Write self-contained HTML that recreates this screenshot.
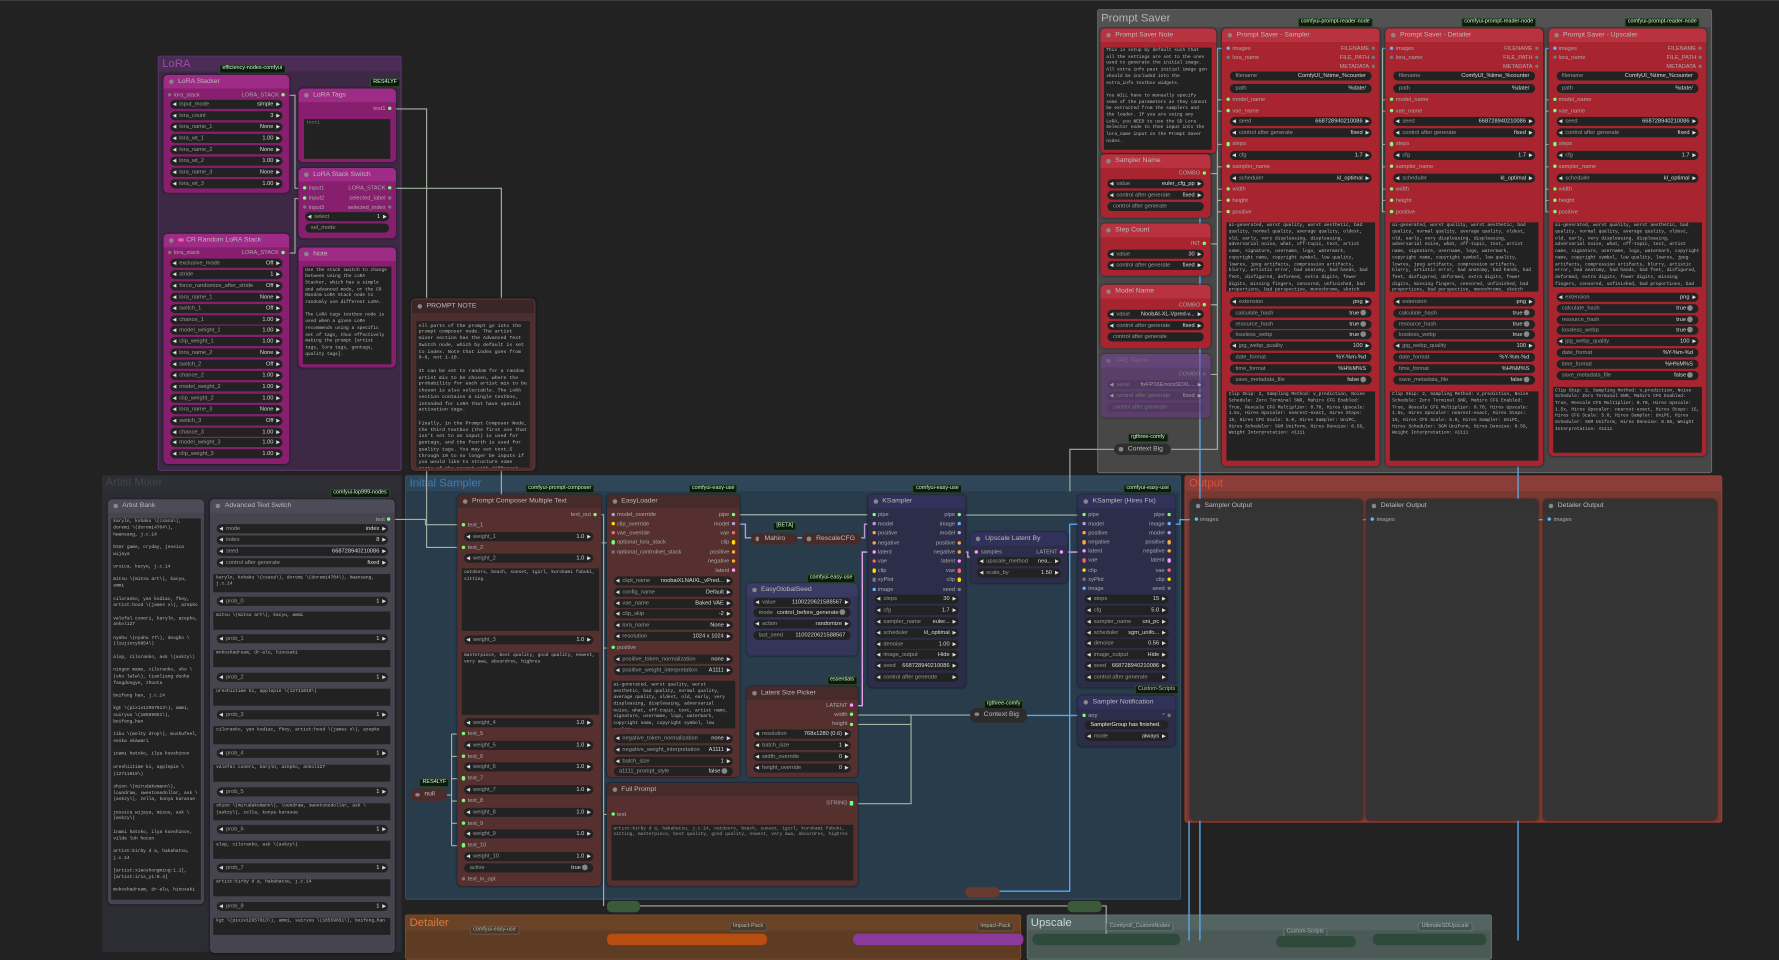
<!DOCTYPE html>
<html><head><meta charset="utf-8"><style>
*{box-sizing:border-box}
html,body{margin:0;padding:0;width:1779px;height:939px;overflow:hidden;background:#222}
.c{position:absolute;left:0;top:0;width:1568px;height:828px;transform:scale(1.13457);transform-origin:0 0;font-family:"Liberation Sans",sans-serif;border-top:1px solid #3a3a3a}
.gr{position:absolute;border-radius:2px}
.gt{position:absolute;left:0;right:0;top:0;height:13px;font-size:10px;line-height:13px;padding-left:3px;white-space:nowrap}
.n{position:absolute;border-radius:4px;overflow:hidden;box-shadow:0 0 2px rgba(0,0,0,.6)}
.t{height:12px;line-height:12px;font-size:6px;padding-left:13px;color:#bbb;position:relative;white-space:nowrap;overflow:hidden}
.t:before{content:"";position:absolute;left:5px;top:4px;width:4px;height:4px;border-radius:50%;background:#888}
.w{position:absolute;margin:0;left:6px;right:6px;height:8px;border-radius:4px;background:#222;font-size:5px;line-height:8px;color:#999;padding:0 8px;white-space:nowrap;overflow:hidden}
.w:before{content:"◀";position:absolute;left:2px;color:#ddd;font-size:4.5px}
.w:after{content:"▶";position:absolute;right:2px;color:#ddd;font-size:4.5px}
.w b{float:right;font-weight:normal;color:#ddd}
.w.x{padding:0 5px}.w.x:before,.w.x:after{content:none}
.w.tg b:after{content:"";display:inline-block;width:5px;height:5px;border-radius:50%;background:#888;margin-left:1px;vertical-align:-1px}
.s{position:absolute;margin:0;font-size:5px;line-height:6px;color:#aaa;white-space:nowrap}
.s.l{left:2px}.s.r{right:2px;text-align:right}
.s i{display:inline-block;width:3.2px;height:3.2px;border-radius:50%;background:#777;vertical-align:middle;margin:0 2px}
i.g{background:#7f7!important}i.p{background:#b39ddb!important}i.y{background:#fd0!important}i.r{background:#f66!important}i.o{background:#fa3!important}i.k{background:#f9f!important}i.b{background:#64b5f6!important}
.tb{position:absolute;margin:0;left:5px;right:5px;background:#222;font-family:"Liberation Mono",monospace;font-size:4px;line-height:5.7px;color:#bbb;padding:1.5px 2px;overflow:hidden;word-wrap:break-word}
.lb{position:absolute;background:#0f1a0f;border:0.5px solid #2c4a2c;color:#cfc;font-size:4.8px;line-height:6px;padding:0 2px;border-radius:1.5px;white-space:nowrap}
.mg{background:#871f6e}.mg>.t{background:#9e2b86}
.rd{background:#a82530}.rd>.t{background:#b93240}
.br{background:#55302f}.br>.t{background:#472b2b}
.bp{background:#2c2d48}.bp>.t{background:#30325a}
.gy{background:#353535}.gy>.t{background:#333}
.am{background:#45444f}.am>.t{background:#4c4b57}
.col{position:absolute;height:10.5px;border-radius:5px;font-size:6px;line-height:10.5px;color:#bbb;padding-left:12px;white-space:nowrap}
.col:before{content:"";position:absolute;left:4px;top:3.5px;width:3.5px;height:3.5px;border-radius:50%;background:#888}
</style></head><body><div class="c">

<div class="gr" style="left:139px;top:47.5px;width:215px;height:366px;background:#3d2946;border:1px solid #5a3468"><div class="gt" style="background:#4a2c55;color:#a04ab0">LoRA</div></div>
<div class="gr" style="left:966.5px;top:6.5px;width:542px;height:409px;background:#474747;border:1px solid #666"><div class="gt" style="background:#525252;color:#b5b5b5;height:15px;line-height:15px">Prompt Saver</div></div>
<div class="gr" style="left:90px;top:418px;width:263.5px;height:420px;background:#2c2c33"><div class="gt" style="background:#2e2e35;color:#44444e">Artist Mixer</div></div>
<div class="gr" style="left:357px;top:418px;width:683.5px;height:373.5px;background:#293c4c;border:1px solid #2f5068"><div class="gt" style="background:#2f4659;color:#3d7fb8">Initial Sampler</div></div>
<div class="gr" style="left:1044px;top:418px;width:473.5px;height:305.5px;background:#773a33;border:1px solid #a53b30"><div class="gt" style="background:#8b3e37;color:#e0503f">Output</div></div>
<div class="gr" style="left:357px;top:805px;width:543px;height:40px;background:#5e3c24;border:1px solid #7a4a28"><div class="gt" style="background:#6a4326;color:#e07a3a">Detailer</div></div>
<div class="gr" style="left:904.5px;top:805px;width:410px;height:40px;background:#4b5a57;border:1px solid #5e706c"><div class="gt" style="background:#536462;color:#c8dcd8">Upscale</div></div>

<svg style="position:absolute;left:0;top:0" width="1568" height="828" fill="none">
<g stroke="#a3b3a3" stroke-width="1">
<path d="M349,95 H376 V481.5 H403"/><path d="M348,456.8 H375 V461.5 H403"/>
<path d="M349,165 H441.9 V477.4 H537"/>
<path d="M255,83 H260 V165 H264"/><path d="M255,222 H260 V174 H264"/>
<path d="M528,452.7 H532 V570.2 H537 M532,570 V716.8 H537 M532,716 V797.5"/>
<path d="M393.6,699.8 H398 M398,646 V744.4 M398,646 H403 M398,665.7 H403 M398,685.3 H403 M398,705 H403 M398,724.7 H403 M398,744.4 H403"/>
<path d="M652,452.7 H764.6"/><path d="M851,453 H950"/>
<path d="M756,629.2 H857 M756,637.5 H803 V629 M756,707.4 H803 V637"/>
<path d="M564,797.5 H941 M971,797.5 H975 V828"/>
<path d="M943,432 V395 H982"/>
<path d="M1032,395 H1073 V41.7 M1073,87 H1080 M1073,97 H1080 M1073,126.3 H1080 M1073,146 H1080 M1073,165.7 H1080 M1073,175.7 H1080 M1073,185.7 H1080 M1067,152 H1073 M1067,214 H1073 M1067,267.6 H1073 M1067,329 H1073"/>
<path d="M1218.5,41.7 V186 M1218.5,87 H1224 M1218.5,97 H1224 M1218.5,126.3 H1224 M1218.5,146 H1224 M1218.5,165.7 H1224 M1218.5,175.7 H1224 M1218.5,185.7 H1224"/>
<path d="M1362.5,41.7 V186 M1362.5,87 H1368 M1362.5,97 H1368 M1362.5,126.3 H1368 M1362.5,146 H1368 M1362.5,165.7 H1368 M1362.5,175.7 H1368 M1362.5,185.7 H1368"/>
</g>
<g stroke="#b39ddb" stroke-width="1.2"><path d="M652,461 H657 V473 H663 M699,473 H707 M759,473 H762 V461 H764.6"/></g>
<g stroke="#f0a0f0" stroke-width="1.2"><path d="M756,621 H760 V485.6 H764.6 M851,485.6 H853 V490 H857 M941,485.6 H950"/></g>
<g stroke="#5aa8ea" stroke-width="1.2"><path d="M905,629.6 H950 M942.8,461 H950 M942.8,461 V784.5 H881 M1035.7,461 H1040 V457 H1050 M1057.6,191 V828 M1048,723 V828 M1338,405 V828 M1073,41.7 H1080 M1218.5,41.7 H1224 M1362.5,41.7 H1368 M1200,457 H1206 M1356,457 H1362"/></g>
</svg>

<div class="lb" style="left:193px;top:56px">efficiency-nodes-comfyui</div>
<div class="lb" style="left:326px;top:68px">RES4LYF</div>
<div class="lb" style="left:193px;top:225px">Comfyroll_CustomNodes</div>
<div class="n mg" style="left:144px;top:65px;width:111px;height:104px"><div class="t">LoRA Stacker</div>
<p class="s l" style="top:15px"><i></i>lora_stack</p><p class="s r" style="top:15px">LORA_STACK<i class="g"></i></p>
<p class="w" style="top:22.4px">input_mode<b>simple</b></p><p class="w" style="top:32.3px">lora_count<b>3</b></p><p class="w" style="top:42.2px">lora_name_1<b>None</b></p><p class="w" style="top:52.1px">lora_wt_1<b>1.00</b></p><p class="w" style="top:62px">lora_name_2<b>None</b></p><p class="w" style="top:71.9px">lora_wt_2<b>1.00</b></p><p class="w" style="top:81.8px">lora_name_3<b>None</b></p><p class="w" style="top:91.7px">lora_wt_3<b>1.00</b></p></div>
<div class="n mg" style="left:144px;top:205px;width:111px;height:203px"><div class="t"><span style="display:inline-block;width:5px;height:3px;background:#f5a;border-radius:2px;margin-right:2px"></span>CR Random LoRA Stack</div>
<p class="s l" style="top:14px"><i></i>lora_stack</p><p class="s r" style="top:14px">LORA_STACK<i class="g"></i></p>
<p class="w" style="top:22px">exclusive_mode<b>Off</b></p><p class="w" style="top:31.9px">stride<b>1</b></p><p class="w" style="top:41.8px">force_randomize_after_stride<b>Off</b></p><p class="w" style="top:51.7px">lora_name_1<b>None</b></p><p class="w" style="top:61.6px">switch_1<b>Off</b></p><p class="w" style="top:71.5px">chance_1<b>1.00</b></p><p class="w" style="top:81.4px">model_weight_1<b>1.00</b></p><p class="w" style="top:91.3px">clip_weight_1<b>1.00</b></p><p class="w" style="top:101.2px">lora_name_2<b>None</b></p><p class="w" style="top:111.1px">switch_2<b>Off</b></p><p class="w" style="top:121px">chance_2<b>1.00</b></p><p class="w" style="top:130.9px">model_weight_2<b>1.00</b></p><p class="w" style="top:140.8px">clip_weight_2<b>1.00</b></p><p class="w" style="top:150.7px">lora_name_3<b>None</b></p><p class="w" style="top:160.6px">switch_3<b>Off</b></p><p class="w" style="top:170.5px">chance_3<b>1.00</b></p><p class="w" style="top:180.4px">model_weight_3<b>1.00</b></p><p class="w" style="top:190.3px">clip_weight_3<b>1.00</b></p></div>
<div class="n mg" style="left:263px;top:77px;width:86px;height:65px"><div class="t">LoRA Tags</div>
<p class="s r" style="top:15px">text1<i class="g"></i></p><p class="tb" style="top:27px;height:35px;color:#888">text1</p></div>
<div class="n mg" style="left:263px;top:147px;width:86px;height:62px"><div class="t">LoRA Stack Switch</div>
<p class="s l" style="top:15px"><i class="g"></i>input1</p><p class="s r" style="top:15px">LORA_STACK<i class="g"></i></p>
<p class="s l" style="top:24px"><i class="g"></i>input2</p><p class="s r" style="top:24px">selected_label<i></i></p>
<p class="s l" style="top:31.5px"><i></i>input3</p><p class="s r" style="top:31.5px">selected_index<i></i></p>
<p class="w" style="top:39px">select<b>1</b></p><p class="w x tg" style="top:49px">sel_mode<b>sel_mode_on_execution</b></p></div>
<div class="n mg" style="left:263px;top:217px;width:86px;height:106px"><div class="t">Note</div>
<p class="tb" style="top:17px;height:86px;left:4px;right:4px">Use the stack switch to change between using the LoRA Stacker, which has a simple and advanced mode, or the CR Random LoRA Stack node to randomly use different LoRA.<br><br>The LoRA tags textbox node is used when a given LoRA recommends using a specific set of tags, thus effectively making the prompt [artist tags, lora tags, gentags, quality tags].</p></div>
<div class="n" style="left:362px;top:262px;width:110px;height:152px;background:#4d2e2e;border:1px solid #5a3434"><div class="t" style="background:#3a2626">PROMPT NOTE</div>
<p class="tb" style="top:19px;height:129px;left:4px;right:4px;font-size:4.3px;line-height:5.75px">All parts of the prompt go into the prompt composer node. The artist mixer section has the Advanced Text Switch node, which by default is set to index. Note that index goes from 0-9, not 1-10.<br><br>It can be set to random for a random artist mix to be chosen, where the probability for each artist mix to be chosen is also selectable. The LoRA section contains a single textbox, intended for LoRA that have special activation tags.<br><br>Finally, in the Prompt Composer Node, the third textbox (the first one that isn't set to an input) is used for gentags, and the fourth is used for quality tags. You may set text_5 through 10 to no longer be inputs if you would like to structure some parts of the prompt with different, easily selectable weights.</p></div>

<div class="lb" style="left:1143.5px;top:15px">comfyui-prompt-reader-node</div>
<div class="lb" style="left:1287.6px;top:15px">comfyui-prompt-reader-node</div>
<div class="lb" style="left:1431.7px;top:15px">comfyui-prompt-reader-node</div>
<div class="n rd" style="left:970px;top:23.5px;width:102px;height:110px"><div class="t">Prompt Saver Note</div>
<p class="tb" style="top:17px;height:90px;left:3px;right:4px">This is setup by default such that all the settings are set to the ones used to generate the initial image. All extra info past initial image gen should be included into the extra_info textbox widgets.<br><br>You WILL have to manually specify some of the parameters as they cannot be extracted from the samplers and the loader. If you are using any LoRA, you NEED to use the SD Lora Selector node to then input into the lora_name input on the Prompt Saver nodes.</p></div>
<div class="n rd" style="left:970px;top:134.6px;width:97px;height:56px"><div class="t">Sampler Name</div>
<p class="s r" style="top:14.4px">COMBO<i class="g"></i></p><p class="w" style="top:22.4px">value<b>euler_cfg_pp</b></p><p class="w" style="top:32.4px">control after generate<b>fixed</b></p><p class="w x" style="top:42.4px">control after generate</p></div>
<div class="n rd" style="left:970px;top:196px;width:97px;height:46px"><div class="t">Step Count</div>
<p class="s r" style="top:15px">INT<i class="g"></i></p><p class="w" style="top:23px">value<b>30</b></p><p class="w" style="top:32.7px">control after generate<b>fixed</b></p></div>
<div class="n rd" style="left:970px;top:249.7px;width:97px;height:56px"><div class="t">Model Name</div>
<p class="s r" style="top:14.9px">COMBO<i class="g"></i></p><p class="w" style="top:22.8px">value<b>NoobAI-XL-Vpred-v...</b></p><p class="w" style="top:32.7px">control after generate<b>fixed</b></p><p class="w x" style="top:42.3px">control after generate</p></div>
<div class="n" style="left:970px;top:311px;width:97px;height:56px;background:#6a3a8a;opacity:.55"><div class="t" style="background:#7a44a0;color:#a7a">VAE Name</div>
<p class="s r" style="top:15px">COMBO<i></i></p><p class="w" style="top:23px;background:#5a2c78">value<b>fixFP16ErrorsSDXL...</b></p><p class="w" style="top:33px;background:#5a2c78">control after generate<b>fixed</b></p><p class="w x" style="top:43px;background:#5a2c78">control after generate</p></div>
<div class="lb" style="left:994px;top:381px">rgthree-comfy</div>
<div class="col" style="left:982px;top:389.5px;width:50px;background:#2e2e2e">Context Big</div>

<div class="n rd" style="left:1077px;top:23.5px;width:139px;height:386px"><div class="t">Prompt Saver - Sampler</div>
<p class="s l" style="top:15.2px"><i class="b"></i>images</p><p class="s r" style="top:15.2px">FILENAME<i></i></p>
<p class="s l" style="top:23.4px"><i></i>lora_name</p><p class="s r" style="top:23.4px">FILE_PATH<i></i></p><p class="s r" style="top:31.4px">METADATA<i></i></p>
<p class="w x" style="top:38.9px;left:7px;right:7px">filename<b>ComfyUI_%time_%counter</b></p><p class="w x" style="top:49.2px;left:7px;right:7px">path<b>%date/</b></p>
<p class="s l" style="top:60.5px"><i class="g"></i>model_name</p><p class="s l" style="top:70.5px"><i class="g"></i>vae_name</p>
<p class="w" style="top:78.9px;left:7px;right:7px">seed<b>668728940210086</b></p><p class="w" style="top:88.5px;left:7px;right:7px">control after generate<b>fixed</b></p>
<p class="s l" style="top:99.8px"><i class="g"></i>steps</p><p class="w" style="top:108.2px;left:7px;right:7px">cfg<b>1.7</b></p>
<p class="s l" style="top:119.5px"><i class="g"></i>sampler_name</p><p class="w" style="top:128.2px;left:7px;right:7px">scheduler<b>kl_optimal</b></p>
<p class="s l" style="top:139.2px"><i class="g"></i>width</p><p class="s l" style="top:149.2px"><i class="g"></i>height</p><p class="s l" style="top:159.2px"><i class="g"></i>positive</p>
<p class="tb" style="top:171.3px;height:60.8px;left:4px;right:4px">ai-generated, worst quality, worst aesthetic, bad quality, normal quality, average quality, oldest, old, early, very displeasing, displeasing, adversarial noise, what, off-topic, text, artist name, signature, username, logo, watermark, copyright name, copyright symbol, low quality, lowres, jpeg artifacts, compression artifacts, blurry, artistic error, bad anatomy, bad hands, bad feet, disfigured, deformed, extra digits, fewer digits, missing fingers, censored, unfinished, bad proportions, bad perspective, monochrome, sketch</p>
<p class="w" style="top:237.5px;left:7px;right:7px">extension<b>png</b></p><p class="w x tg" style="top:247.5px;left:7px;right:7px">calculate_hash<b>true</b></p><p class="w x tg" style="top:257.2px;left:7px;right:7px">resource_hash<b>true</b></p><p class="w x tg" style="top:266.9px;left:7px;right:7px">lossless_webp<b>true</b></p><p class="w" style="top:276.9px;left:7px;right:7px">jpg_webp_quality<b>100</b></p><p class="w x" style="top:286.9px;left:7px;right:7px">date_format<b>%Y-%m-%d</b></p><p class="w x" style="top:296.8px;left:7px;right:7px">time_format<b>%H%M%S</b></p><p class="w x tg" style="top:306.5px;left:7px;right:7px">save_metadata_file<b>false</b></p>
<p class="tb" style="top:320.2px;height:61.7px;left:4px;right:4px">Clip Skip: 2, Sampling Method: v_prediction, Noise Schedule: Zero Terminal SNR, Mahiro CFG Enabled: True, Rescale CFG Multiplier: 0.70, Hires Upscale: 1.5x, Hires Upscaler: nearest-exact, Hires Steps: 15, Hires CFG Scale: 5.0, Hires Sampler: UniPC, Hires Scheduler: SGM Uniform, Hires Denoise: 0.56, Weight Interpretation: A1111</p></div>

<div class="n rd" style="left:1221px;top:23.5px;width:139px;height:386px"><div class="t">Prompt Saver - Detailer</div>
<p class="s l" style="top:15.2px"><i class="b"></i>images</p><p class="s r" style="top:15.2px">FILENAME<i></i></p>
<p class="s l" style="top:23.4px"><i></i>lora_name</p><p class="s r" style="top:23.4px">FILE_PATH<i></i></p><p class="s r" style="top:31.4px">METADATA<i></i></p>
<p class="w x" style="top:38.9px;left:7px;right:7px">filename<b>ComfyUI_%time_%counter</b></p><p class="w x" style="top:49.2px;left:7px;right:7px">path<b>%date/</b></p>
<p class="s l" style="top:60.5px"><i class="g"></i>model_name</p><p class="s l" style="top:70.5px"><i class="g"></i>vae_name</p>
<p class="w" style="top:78.9px;left:7px;right:7px">seed<b>668728940210086</b></p><p class="w" style="top:88.5px;left:7px;right:7px">control after generate<b>fixed</b></p>
<p class="s l" style="top:99.8px"><i class="g"></i>steps</p><p class="w" style="top:108.2px;left:7px;right:7px">cfg<b>1.7</b></p>
<p class="s l" style="top:119.5px"><i class="g"></i>sampler_name</p><p class="w" style="top:128.2px;left:7px;right:7px">scheduler<b>kl_optimal</b></p>
<p class="s l" style="top:139.2px"><i class="g"></i>width</p><p class="s l" style="top:149.2px"><i class="g"></i>height</p><p class="s l" style="top:159.2px"><i class="g"></i>positive</p>
<p class="tb" style="top:171.3px;height:60.8px;left:4px;right:4px">ai-generated, worst quality, worst aesthetic, bad quality, normal quality, average quality, oldest, old, early, very displeasing, displeasing, adversarial noise, what, off-topic, text, artist name, signature, username, logo, watermark, copyright name, copyright symbol, low quality, lowres, jpeg artifacts, compression artifacts, blurry, artistic error, bad anatomy, bad hands, bad feet, disfigured, deformed, extra digits, fewer digits, missing fingers, censored, unfinished, bad proportions, bad perspective, monochrome, sketch</p>
<p class="w" style="top:237.5px;left:7px;right:7px">extension<b>png</b></p><p class="w x tg" style="top:247.5px;left:7px;right:7px">calculate_hash<b>true</b></p><p class="w x tg" style="top:257.2px;left:7px;right:7px">resource_hash<b>true</b></p><p class="w x tg" style="top:266.9px;left:7px;right:7px">lossless_webp<b>true</b></p><p class="w" style="top:276.9px;left:7px;right:7px">jpg_webp_quality<b>100</b></p><p class="w x" style="top:286.9px;left:7px;right:7px">date_format<b>%Y-%m-%d</b></p><p class="w x" style="top:296.8px;left:7px;right:7px">time_format<b>%H%M%S</b></p><p class="w x tg" style="top:306.5px;left:7px;right:7px">save_metadata_file<b>false</b></p>
<p class="tb" style="top:320.2px;height:61.7px;left:4px;right:4px">Clip Skip: 2, Sampling Method: v_prediction, Noise Schedule: Zero Terminal SNR, Mahiro CFG Enabled: True, Rescale CFG Multiplier: 0.70, Hires Upscale: 1.5x, Hires Upscaler: nearest-exact, Hires Steps: 15, Hires CFG Scale: 5.0, Hires Sampler: UniPC, Hires Scheduler: SGM Uniform, Hires Denoise: 0.56, Weight Interpretation: A1111</p></div>

<div class="n rd" style="left:1364.6px;top:23.5px;width:139.5px;height:377.5px"><div class="t">Prompt Saver - Upscaler</div>
<p class="s l" style="top:15.2px"><i class="b"></i>images</p><p class="s r" style="top:15.2px">FILENAME<i></i></p>
<p class="s l" style="top:23.4px"><i></i>lora_name</p><p class="s r" style="top:23.4px">FILE_PATH<i></i></p><p class="s r" style="top:31.4px">METADATA<i></i></p>
<p class="w x" style="top:38.9px;left:7px;right:7px">filename<b>ComfyUI_%time_%counter</b></p><p class="w x" style="top:49.2px;left:7px;right:7px">path<b>%date/</b></p>
<p class="s l" style="top:60.5px"><i class="g"></i>model_name</p><p class="s l" style="top:70.5px"><i class="g"></i>vae_name</p>
<p class="w" style="top:78.9px;left:7px;right:7px">seed<b>668728940210086</b></p><p class="w" style="top:88.5px;left:7px;right:7px">control after generate<b>fixed</b></p>
<p class="s l" style="top:99.8px"><i class="g"></i>steps</p><p class="w" style="top:108.2px;left:7px;right:7px">cfg<b>1.7</b></p>
<p class="s l" style="top:119.5px"><i class="g"></i>sampler_name</p><p class="w" style="top:128.2px;left:7px;right:7px">scheduler<b>kl_optimal</b></p>
<p class="s l" style="top:139.2px"><i class="g"></i>width</p><p class="s l" style="top:149.2px"><i class="g"></i>height</p><p class="s l" style="top:159.2px"><i class="g"></i>positive</p>
<p class="tb" style="top:171.3px;height:57px;left:4px;right:4px">ai-generated, worst quality, worst aesthetic, bad quality, normal quality, average quality, oldest, old, early, very displeasing, displeasing, adversarial noise, what, off-topic, text, artist name, signature, username, logo, watermark, copyright name, copyright symbol, low quality, lowres, jpeg artifacts, compression artifacts, blurry, artistic error, bad anatomy, bad hands, bad feet, disfigured, deformed, extra digits, fewer digits, missing fingers, censored, unfinished, bad proportions, bad perspective, monochrome, sketch</p>
<p class="w" style="top:233.5px;left:7px;right:7px">extension<b>png</b></p><p class="w x tg" style="top:243.2px;left:7px;right:7px">calculate_hash<b>true</b></p><p class="w x tg" style="top:253.1px;left:7px;right:7px">resource_hash<b>true</b></p><p class="w x tg" style="top:262.8px;left:7px;right:7px">lossless_webp<b>true</b></p><p class="w" style="top:272.8px;left:7px;right:7px">jpg_webp_quality<b>100</b></p><p class="w x" style="top:282.7px;left:7px;right:7px">date_format<b>%Y-%m-%d</b></p><p class="w x" style="top:292.7px;left:7px;right:7px">time_format<b>%H%M%S</b></p><p class="w x tg" style="top:302.7px;left:7px;right:7px">save_metadata_file<b>false</b></p>
<p class="tb" style="top:316.5px;height:58px;left:4px;right:4px">Clip Skip: 2, Sampling Method: v_prediction, Noise Schedule: Zero Terminal SNR, Mahiro CFG Enabled: True, Rescale CFG Multiplier: 0.70, Hires Upscale: 1.5x, Hires Upscaler: nearest-exact, Hires Steps: 15, Hires CFG Scale: 5.0, Hires Sampler: UniPC, Hires Scheduler: SGM Uniform, Hires Denoise: 0.56, Weight Interpretation: A1111</p></div>

<div class="lb" style="left:290.7px;top:430.4px">comfyui-lop999-nodes</div>
<div class="n am" style="left:94.8px;top:438.6px;width:85.6px;height:357.5px"><div class="t">Artist Bank</div>
<p class="tb" style="top:17px;height:336px;left:3px;right:3px">karyln, kohaku \(csaca\), doremi \(doremi4704\), hwansang, j.c.14<br><br>btmr game, cryday, jessica wijaya<br><br>ursica, kacyu, j.c.14<br><br>mitsu \(mitsu art\), kacyu, ammi<br><br>ciloranko, yan kodiac, fkey, artist:hood \(james x\), azepko<br><br>valefal coneri, karyln, azepko, ankol127<br><br>nyahu \(nyahu 77\), deogho \(liujinzy9854\)<br><br>alop, ciloranko, ask \(askzy\)<br><br>ningen mame, ciloranko, sho \(sho lwlw\), tianliang duohe fangdongye, zhuota<br><br>beifeng han, j.c.14<br><br>kgt \(pixiv12957613\), ammi, suiryuu \(18559651\), beifeng_han<br><br>ziku \(melty drop\), mushufeel, seika okawari<br><br>inami hatoko, ilya kuvshinov<br><br>ureshiitime ki, applepie \(12711019\)<br><br>shion \(mirudakemann\), loundraw, sweetonedollar, ask \(askzy\), zella, konya karasue<br><br>jessica wijaya, misou, ask \(askzy\)<br><br>inami hatoko, ilya kuvshinov, vilde loh hocen<br><br>artist:kirby d a, hakahatsu, j.c.14<br><br>[artist:xiaoshongming:1.1], [artist:iris_yi:0.4]<br><br>mokoshadream, dr-alu, hinosaki</p></div>
<div class="n am" style="left:185.2px;top:438.6px;width:163.2px;height:400px"><div class="t">Advanced Text Switch</div>
<p class="s r" style="top:15.2px">text<i class="g"></i></p>
<p class="w" style="top:22.7px">mode<b>index</b></p><p class="w" style="top:32.7px">index<b>8</b></p><p class="w" style="top:42.7px">seed<b>668728940210086</b></p><p class="w" style="top:52.7px">control after generate<b>fixed</b></p>
<p class="tb" style="top:66.7px;height:15.3px;left:3.3px;right:4px">karyln, kohaku \(csaca\), doremi \(doremi4704\), hwansang, j.c.14</p>
<p class="w" style="top:86.2px">prob_0<b>1</b></p><p class="tb" style="top:99.9px;height:15.3px;left:3.3px;right:4px">mitsu \(mitsu art\), kacyu, ammi</p>
<p class="w" style="top:119.7px">prob_1<b>1</b></p><p class="tb" style="top:133.4px;height:15.3px;left:3.3px;right:4px">mokoshadream, dr-alu, hinosaki</p>
<p class="w" style="top:153.4px">prob_2<b>1</b></p><p class="tb" style="top:167.4px;height:15.3px;left:3.3px;right:4px">ureshiitime ki, applepie \(12711019\)</p>
<p class="w" style="top:186.9px">prob_3<b>1</b></p><p class="tb" style="top:200.9px;height:15.3px;left:3.3px;right:4px">ciloranko, yan kodiac, fkey, artist:hood \(james x\), azepko</p>
<p class="w" style="top:220.4px">prob_4<b>1</b></p><p class="tb" style="top:234.4px;height:15.3px;left:3.3px;right:4px">valefal coneri, karyln, azepko, ankol127</p>
<p class="w" style="top:254.2px">prob_5<b>1</b></p><p class="tb" style="top:268.2px;height:15.3px;left:3.3px;right:4px">shion \(mirudakemann\), loundraw, sweetonedollar, ask \(askzy\), zella, konya karasue</p>
<p class="w" style="top:287.7px">prob_6<b>1</b></p><p class="tb" style="top:301.7px;height:15.3px;left:3.3px;right:4px">alop, ciloranko, ask \(askzy\)</p>
<p class="w" style="top:321.4px">prob_7<b>1</b></p><p class="tb" style="top:335.2px;height:15.3px;left:3.3px;right:4px">artist:kirby d a, hakahatsu, j.c.14</p>
<p class="w" style="top:355.3px">prob_8<b>1</b></p><p class="tb" style="top:369.3px;height:15.3px;left:3.3px;right:4px">kgt \(pixiv12957613\), ammi, suiryuu \(18559651\), beifeng_han</p></div>

<div class="lb" style="left:462.5px;top:426px">comfyui-prompt-composer</div>
<div class="lb" style="left:606.8px;top:426px">comfyui-easy-use</div>
<div class="lb" style="left:804.4px;top:426px">comfyui-easy-use</div>
<div class="lb" style="left:989.8px;top:426px">comfyui-easy-use</div>
<div class="n br" style="left:403px;top:435px;width:127px;height:345px"><div class="t">Prompt Composer Multiple Text</div>
<p class="s r" style="top:14.7px">text_out<i class="g"></i></p>
<p class="s l" style="top:23.5px"><i class="g"></i>text_1</p><p class="w" style="top:32.5px;right:7px">weight_1<b>1.0</b></p>
<p class="s l" style="top:43.5px"><i class="g"></i>text_2</p><p class="w" style="top:51.9px;right:7px">weight_2<b>1.0</b></p>
<p class="tb" style="top:65.3px;height:55px;left:4px;right:2px">outdoors, beach, sunset, 1girl, kurokami fubuki, sitting</p>
<p class="w" style="top:124.4px;right:7px">weight_3<b>1.0</b></p>
<p class="tb" style="top:138.7px;height:55px;left:4px;right:2px">masterpiece, best quality, good quality, newest, very awa, absurdres, highres</p>
<p class="w" style="top:197px;right:7px">weight_4<b>1.0</b></p>
<p class="s l" style="top:208px"><i class="g"></i>text_5</p><p class="w" style="top:216.7px;right:7px">weight_5<b>1.0</b></p>
<p class="s l" style="top:227.7px"><i class="g"></i>text_6</p><p class="w" style="top:236px;right:7px">weight_6<b>1.0</b></p>
<p class="s l" style="top:247.3px"><i class="g"></i>text_7</p><p class="w" style="top:256px;right:7px">weight_7<b>1.0</b></p>
<p class="s l" style="top:267px"><i class="g"></i>text_8</p><p class="w" style="top:275.7px;right:7px">weight_8<b>1.0</b></p>
<p class="s l" style="top:286.7px"><i class="g"></i>text_9</p><p class="w" style="top:295.4px;right:7px">weight_9<b>1.0</b></p>
<p class="s l" style="top:306.4px"><i class="g"></i>text_10</p><p class="w" style="top:315px;right:7px">weight_10<b>1.0</b></p>
<p class="w x tg" style="top:324.8px;right:7px">active<b>true</b></p>
<p class="s l" style="top:336px"><i></i>text_in_opt</p></div>

<div class="lb" style="left:369.4px;top:685px">RES4LYF</div>
<div class="col" style="left:362px;top:694px;width:31.6px;background:#4a2c2c">null</div>

<div class="n br" style="left:534.6px;top:435px;width:117.4px;height:249px"><div class="t">EasyLoader</div>
<p class="s l" style="top:14.7px"><i class="p"></i>model_override</p><p class="s r" style="top:14.7px">pipe<i class="g"></i></p>
<p class="s l" style="top:22.9px"><i class="y"></i>clip_override</p><p class="s r" style="top:22.9px">model<i class="p"></i></p>
<p class="s l" style="top:31.1px"><i class="r"></i>vae_override</p><p class="s r" style="top:31.1px">vae<i class="r"></i></p>
<p class="s l" style="top:39.4px"><i class="g"></i>optional_lora_stack</p><p class="s r" style="top:39.4px">clip<i class="y"></i></p>
<p class="s l" style="top:47.6px"><i></i>optional_controlnet_stack</p><p class="s r" style="top:47.6px">positive<i class="o"></i></p>
<p class="s r" style="top:55.8px">negative<i class="o"></i></p><p class="s r" style="top:64px">latent<i class="k"></i></p>
<p class="w" style="top:71.6px">ckpt_name<b>noobaiXLNAIXL_vPred...</b></p><p class="w" style="top:81.5px">config_name<b>Default</b></p><p class="w" style="top:91.5px">vae_name<b>Baked VAE</b></p><p class="w" style="top:101.2px">clip_skip<b>-2</b></p><p class="w" style="top:111.2px">lora_name<b>None</b></p><p class="w" style="top:120.9px">resolution<b>1024 x 1024</b></p>
<p class="s l" style="top:132.2px"><i class="g"></i>positive</p>
<p class="w" style="top:140.9px">positive_token_normalization<b>none</b></p><p class="w" style="top:150.6px">positive_weight_interpretation<b>A1111</b></p>
<p class="tb" style="top:164.3px;height:41.7px;left:4px;right:4px">ai-generated, worst quality, worst aesthetic, bad quality, normal quality, average quality, oldest, old, early, very displeasing, displeasing, adversarial noise, what, off-topic, text, artist name, signature, username, logo, watermark, copyright name, copyright symbol, low quality</p>
<p class="w" style="top:210.5px">negative_token_normalization<b>none</b></p><p class="w" style="top:220.5px">negative_weight_interpretation<b>A1111</b></p><p class="w" style="top:230.5px">batch_size<b>1</b></p><p class="w x tg" style="top:240.2px">a1111_prompt_style<b>false</b></p></div>

<div class="n br" style="left:534.6px;top:689px;width:221.6px;height:91px"><div class="t">Full Prompt</div>
<p class="s r" style="top:15.4px">STRING<i class="g" style="border-radius:0"></i></p><p class="s l" style="top:24.8px"><i class="g"></i>text</p>
<p class="tb" style="top:37.2px;height:49px;left:4px;right:4px;color:#999">artist:kirby d a, hakahatsu, j.c.14, outdoors, beach, sunset, 1girl, kurokami fubuki, sitting, masterpiece, best quality, good quality, newest, very awa, absurdres, highres</p></div>

<div class="lb" style="left:681.3px;top:459px">[BETA]</div>
<div class="col" style="left:661.8px;top:468.5px;width:41.5px;background:#472b2b">Mahiro</div>
<div class="col" style="left:707.3px;top:468.5px;width:51.7px;background:#472b2b">RescaleCFG</div>

<div class="lb" style="left:710.7px;top:505px">comfyui-easy-use</div>
<div class="n" style="left:657.7px;top:513.2px;width:98.5px;height:64.3px;background:#333559"><div class="t" style="background:#393b62">EasyGlobalSeed</div>
<p class="w" style="top:12.5px">value<b>1100220621588567</b></p><p class="w x tg" style="top:22.1px">mode<b>control_before_generate</b></p><p class="w" style="top:32.1px">action<b>randomize</b></p><p class="w x" style="top:41.8px">last_seed<b>1100220621588567</b></p></div>

<div class="lb" style="left:728.5px;top:595px">essentials</div>
<div class="n br" style="left:657.7px;top:603.7px;width:98.5px;height:80.2px"><div class="t">Latent Size Picker</div>
<p class="s r" style="top:14.3px">LATENT<i class="k"></i></p><p class="s r" style="top:22.5px">width<i class="g"></i></p><p class="s r" style="top:30.8px">height<i class="g"></i></p>
<p class="w" style="top:38.6px">resolution<b>768x1280 (0.6)</b></p><p class="w" style="top:48.6px">batch_size<b>1</b></p><p class="w" style="top:58.3px">width_override<b>0</b></p><p class="w" style="top:68.3px">height_override<b>0</b></p></div>

<div class="n bp" style="left:764.6px;top:435px;width:86.4px;height:170.2px"><div class="t">KSampler</div>
<p class="s l" style="top:15px"><i class="g"></i>pipe</p><p class="s r" style="top:15px">pipe<i class="g"></i></p>
<p class="s l" style="top:23px"><i class="p"></i>model</p><p class="s r" style="top:23px">image<i class="b"></i></p>
<p class="s l" style="top:31px"><i class="o"></i>positive</p><p class="s r" style="top:31px">model<i class="p"></i></p>
<p class="s l" style="top:39.7px"><i class="o"></i>negative</p><p class="s r" style="top:39.7px">positive<i class="o"></i></p>
<p class="s l" style="top:47.6px"><i class="k"></i>latent</p><p class="s r" style="top:47.6px">negative<i class="o"></i></p>
<p class="s l" style="top:55.7px"><i class="r"></i>vae</p><p class="s r" style="top:55.7px">latent<i class="k"></i></p>
<p class="s l" style="top:64.4px"><i class="y"></i>clip</p><p class="s r" style="top:64.4px">vae<i class="r"></i></p>
<p class="s l" style="top:72.3px"><i></i>xyPlot</p><p class="s r" style="top:72.3px">clip<i class="y"></i></p>
<p class="s l" style="top:80.6px"><i class="b"></i>image</p><p class="s r" style="top:80.6px">seed<i></i></p>
<p class="w" style="top:88px">steps<b>30</b></p><p class="w" style="top:98px">cfg<b>1.7</b></p><p class="w" style="top:108px">sampler_name<b>euler...</b></p><p class="w" style="top:118px">scheduler<b>kl_optimal</b></p><p class="w" style="top:127.7px">denoise<b>1.00</b></p><p class="w" style="top:137.4px">image_output<b>Hide</b></p><p class="w" style="top:147.4px">seed<b>668728940210086</b></p><p class="w" style="top:157.4px">control after generate</p></div>

<div class="n bp" style="left:855.3px;top:467.7px;width:86px;height:45.3px"><div class="t">Upscale Latent By</div>
<p class="s l" style="top:14.9px"><i class="k"></i>samples</p><p class="s r" style="top:14.9px">LATENT<i class="k"></i></p>
<p class="w" style="top:22.8px">upscale_method<b>nea...</b></p><p class="w" style="top:32.3px">scale_by<b>1.50</b></p></div>

<div class="n bp" style="left:950px;top:434.6px;width:85.7px;height:170.6px"><div class="t">KSampler (Hires Fix)</div>
<p class="s l" style="top:15px"><i class="g"></i>pipe</p><p class="s r" style="top:15px">pipe<i class="g"></i></p>
<p class="s l" style="top:23px"><i class="p"></i>model</p><p class="s r" style="top:23px">image<i class="b"></i></p>
<p class="s l" style="top:31px"><i class="o"></i>positive</p><p class="s r" style="top:31px">model<i class="p"></i></p>
<p class="s l" style="top:39.7px"><i class="o"></i>negative</p><p class="s r" style="top:39.7px">positive<i class="o"></i></p>
<p class="s l" style="top:47.6px"><i class="k"></i>latent</p><p class="s r" style="top:47.6px">negative<i class="o"></i></p>
<p class="s l" style="top:55.7px"><i class="r"></i>vae</p><p class="s r" style="top:55.7px">latent<i class="k"></i></p>
<p class="s l" style="top:64.4px"><i class="y"></i>clip</p><p class="s r" style="top:64.4px">vae<i class="r"></i></p>
<p class="s l" style="top:72.3px"><i></i>xyPlot</p><p class="s r" style="top:72.3px">clip<i class="y"></i></p>
<p class="s l" style="top:80.6px"><i class="b"></i>image</p><p class="s r" style="top:80.6px">seed<i></i></p>
<p class="w" style="top:88px">steps<b>15</b></p><p class="w" style="top:98px">cfg<b>5.0</b></p><p class="w" style="top:108px">sampler_name<b>uni_pc</b></p><p class="w" style="top:118px">scheduler<b>sgm_unifo...</b></p><p class="w" style="top:127.7px">denoise<b>0.56</b></p><p class="w" style="top:137.4px">image_output<b>Hide</b></p><p class="w" style="top:147.4px">seed<b>668728940210086</b></p><p class="w" style="top:157.4px">control after generate</p></div>
<div class="lb" style="left:1000px;top:603px;color:#bbb">Custom-Scripts</div>
<div class="n bp" style="left:950px;top:611.7px;width:85.7px;height:45px"><div class="t">Sampler Notification</div>
<p class="s l" style="top:14.9px"><i class="g"></i>any</p><p class="s r" style="top:14.9px">*<i></i></p>
<p class="w x" style="top:22.7px;color:#eee">SamplerGroup has finished.</p><p class="w" style="top:32.7px">mode<b>always</b></p></div>

<div class="lb" style="left:866.8px;top:615.8px">rgthree-comfy</div>
<div class="col" style="left:855px;top:623.4px;width:50px;height:12.6px;line-height:12.6px;background:#2c2c2c">Context Big</div>

<div style="position:absolute;left:534.6px;top:793px;width:29.7px;height:9.6px;border-radius:4px;background:#3a5a3a"></div>
<div style="position:absolute;left:941.4px;top:793px;width:30px;height:9.6px;border-radius:4px;background:#3a5a3a"></div>
<div style="position:absolute;left:850.7px;top:781px;width:30.3px;height:9.3px;border-radius:4px;background:#6a3a30"></div>

<div class="n gy" style="left:1048.6px;top:439px;width:152px;height:283px"><div class="t">Sampler Output</div><p class="s l" style="top:15px"><i class="b"></i>images</p></div>
<div class="n gy" style="left:1204px;top:439px;width:152px;height:283px"><div class="t">Detailer Output</div><p class="s l" style="top:15px"><i class="b"></i>images</p></div>
<div class="n gy" style="left:1360px;top:439px;width:152.6px;height:283px"><div class="t">Detailer Output</div><p class="s l" style="top:15px"><i class="b"></i>images</p></div>

<div class="lb" style="left:414px;top:815px;background:#4a3a2a;border-color:#6a5040;color:#bba">comfyui-easy-use</div>
<div class="lb" style="left:643px;top:812px;background:#4a3a2a;border-color:#6a5040;color:#bba">Impact-Pack</div>
<div class="lb" style="left:861px;top:812px;background:#4a3a2a;border-color:#6a5040;color:#bba">Impact-Pack</div>
<div style="position:absolute;left:534.6px;top:822px;width:141px;height:10px;background:#b84d10;border-radius:4px"></div>
<div style="position:absolute;left:752px;top:822px;width:150px;height:10px;background:#8a3a9a;border-radius:4px"></div>
<div class="lb" style="left:975px;top:812px;background:#465450;border-color:#607070;color:#abb">Comfyroll_CustomNodes</div>
<div class="lb" style="left:1131px;top:817px;background:#465450;border-color:#607070;color:#abb">Custom-Scripts</div>
<div class="lb" style="left:1250px;top:812px;background:#465450;border-color:#607070;color:#abb">UltimateSDUpscale</div>
<div style="position:absolute;left:910px;top:822px;width:130px;height:10px;background:#2e4a3a;border-radius:4px"></div>
<div style="position:absolute;left:1125px;top:824px;width:70px;height:10px;background:#2e4a3a;border-radius:4px"></div>
<div style="position:absolute;left:1210px;top:822px;width:100px;height:10px;background:#2e4a3a;border-radius:4px"></div>
</div></body></html>
